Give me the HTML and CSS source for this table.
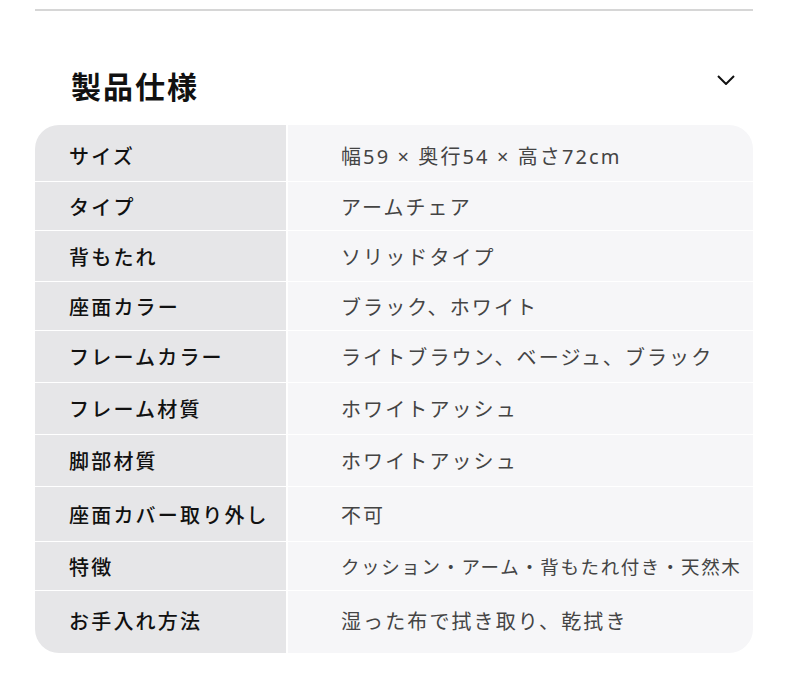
FILE: index.html
```html
<!DOCTYPE html>
<html lang="ja">
<head>
<meta charset="utf-8">
<link rel="stylesheet" href="styles.css">
</head>
<body>
<div class="page">
  <div class="rule"></div>
  <div class="head">
    <h2 class="title">製品仕様</h2>
    <svg class="chev" width="18" height="10" viewBox="0 0 18 10"><path d="M1 1 L9 9 L17 1" fill="none" stroke="#111" stroke-width="2"/></svg>
  </div>
  <div class="spec">
    <div class="row"><div class="k">サイズ</div><div class="v">幅59 × 奥行54 × 高さ72cm</div></div>
    <div class="row"><div class="k">タイプ</div><div class="v">アームチェア</div></div>
    <div class="row"><div class="k">背もたれ</div><div class="v">ソリッドタイプ</div></div>
    <div class="row"><div class="k">座面カラー</div><div class="v">ブラック、ホワイト</div></div>
    <div class="row"><div class="k">フレームカラー</div><div class="v">ライトブラウン、ベージュ、ブラック</div></div>
    <div class="row"><div class="k">フレーム材質</div><div class="v">ホワイトアッシュ</div></div>
    <div class="row"><div class="k">脚部材質</div><div class="v">ホワイトアッシュ</div></div>
    <div class="row"><div class="k">座面カバー取り外し</div><div class="v">不可</div></div>
    <div class="row"><div class="k">特徴</div><div class="v small">クッション・アーム・背もたれ付き・天然木</div></div>
    <div class="row"><div class="k">お手入れ方法</div><div class="v">湿った布で拭き取り、乾拭き</div></div>
  </div>
</div>
</body>
</html>
```

FILE: styles.css
```css
html, body {
  margin: 0;
  padding: 0;
  background: #ffffff;
}
body {
  font-family: "Noto Sans CJK JP", "Noto Sans", sans-serif;
}
.page {
  padding: 9px 37px 0 35px;
}
.rule {
  height: 2px;
  background: #d6d6d6;
}
.head {
  display: flex;
  align-items: center;
  justify-content: space-between;
  height: 40px;
  padding: 54px 18px 20px 36px;
}
.title {
  margin: 0;
  font-size: 30px;
  line-height: 40px;
  font-weight: 700;
  letter-spacing: 2px;
  color: #111;
}
.chev {
  position: relative;
  top: -5px;
}
.spec {
  border-radius: 24px;
  overflow: hidden;
  display: flex;
  flex-direction: column;
  gap: 1px;
  background: #ffffff;
}
.row {
  display: grid;
  grid-template-columns: 251px 1fr;
  column-gap: 2px;
  height: 49px;
}
.row:nth-child(1) { height: 56px; }
.row:nth-child(2) { height: 48px; }
.row:nth-child(3) { height: 50px; }
.row:nth-child(4) { height: 48px; }
.row:nth-child(5) { height: 51px; }
.row:nth-child(6) { height: 51px; }
.row:nth-child(7) { height: 51px; }
.row:nth-child(8) { height: 54px; }
.row:nth-child(9) { height: 48px; }
.row:nth-child(10) { height: 62px; }
.row:nth-child(1) .k, .row:nth-child(1) .v { padding-top: 5px; }
.row:nth-child(10) .k, .row:nth-child(10) .v { padding-bottom: 3px; }
.k, .v {
  display: flex;
  align-items: center;
}
.k {
  background: #e6e6e8;
  padding-left: 34px;
  font-size: 20px;
  font-weight: 500;
  letter-spacing: 2.2px;
  color: #111;
}
.v {
  background: #f6f6f8;
  padding-left: 53px;
  font-family: "Noto Sans", "Noto Sans CJK JP", sans-serif;
  font-size: 20px;
  letter-spacing: 2.1px;
  color: #444;
}
.v.small {
  font-size: 18.5px;
  letter-spacing: 1.6px;
}
```
